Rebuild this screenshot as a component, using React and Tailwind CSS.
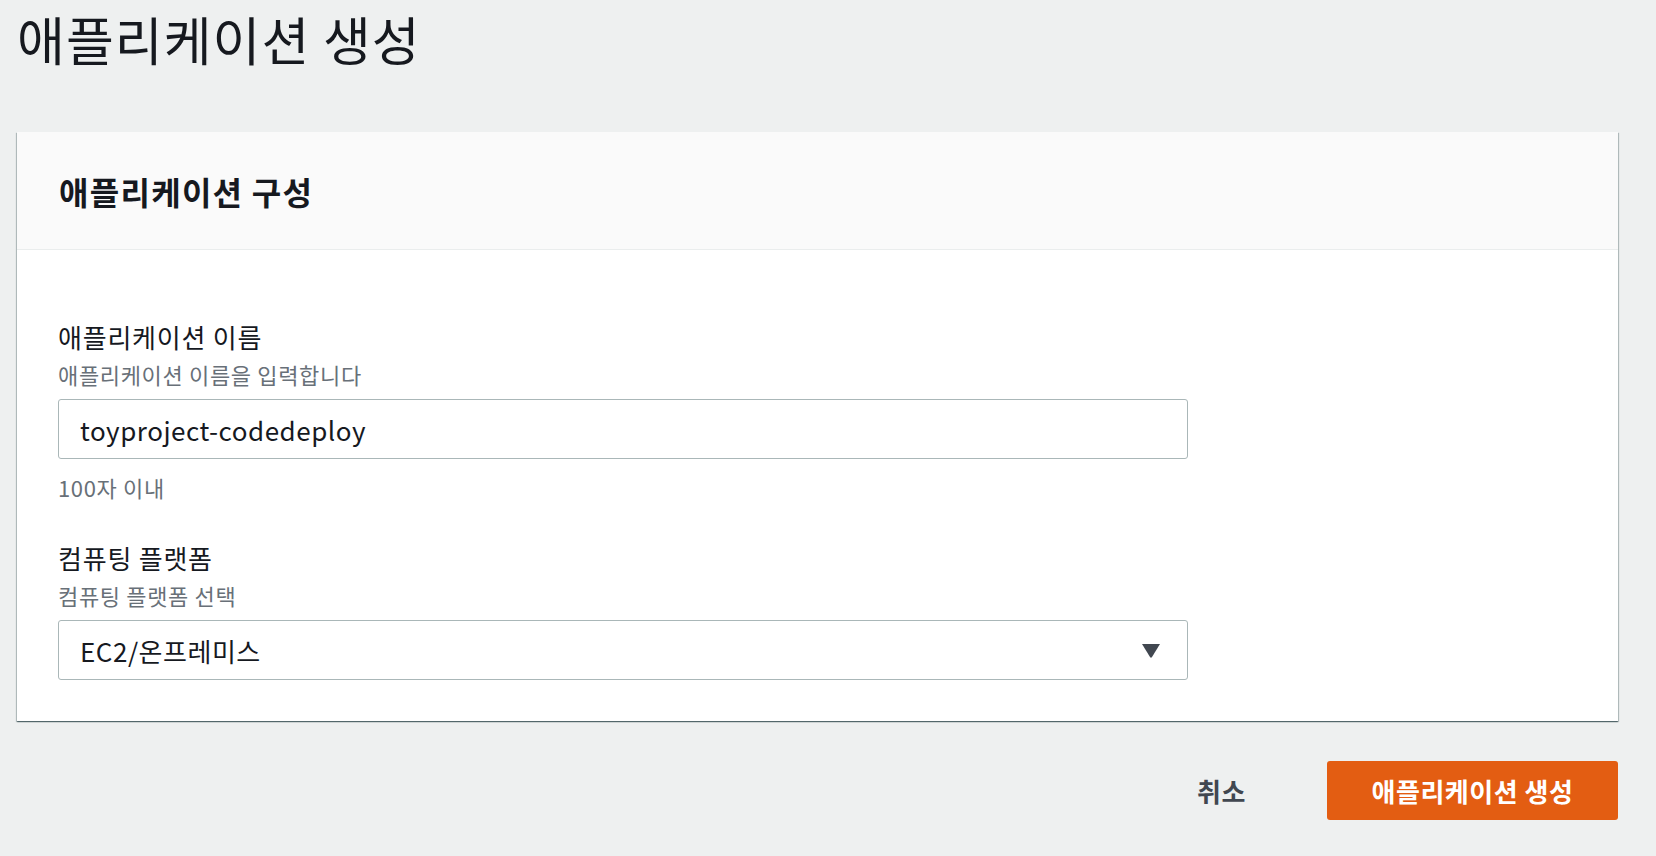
const FONT = "font-['Noto_Sans_CJK_KR','Noto_Sans',sans-serif]";

function Field({ label, description, hint, children }) {
  return (
    <div>
      <p className="text-[26px] leading-[34px] tracking-[0.03em] text-[#16191f]">{label}</p>
      <p className="mt-[7px] text-[22px] leading-[26px] tracking-[0.03em] text-[#687078]">
        {description}
      </p>
      <div className="mt-[12px]">{children}</div>
      {hint ? (
        <p className="mt-[15px] text-[22px] leading-[26px] tracking-[0.03em] text-[#687078]">
          {hint}
        </p>
      ) : null}
    </div>
  );
}

export default function App() {
  return (
    <div className={`min-h-screen bg-[#eef0f0] pl-[17px] pr-[38px] pt-[9px] ${FONT}`}>
      <h1 className="text-[52px] font-normal leading-[60px] tracking-[0.02em] text-[#16191f]">
        애플리케이션 생성
      </h1>

      <section className="mt-[63px] bg-white shadow-[0_1px_1px_0_rgba(0,28,36,0.45),1px_1px_1px_0_rgba(0,28,36,0.2),-1px_1px_1px_0_rgba(0,28,36,0.2)]">
        <div className="flex h-[118px] items-center border-b border-[#eaeded] bg-[#fafafa] px-[42px]">
          <h2 className="text-[32px] font-bold leading-[38px] tracking-[0.04em] text-[#16191f]">
            애플리케이션 구성
          </h2>
        </div>

        <div className="pb-[41px] pl-[41px] pr-[40px] pt-[70px]">
          <div className="w-[1130px]">
            <Field
              label="애플리케이션 이름"
              description="애플리케이션 이름을 입력합니다"
              hint="100자 이내"
            >
              <input
                readOnly
                value="toyproject-codedeploy"
                className={`h-[60px] w-full rounded-[3px] border border-[#aab7b8] bg-white px-[21px] text-[26px] tracking-[0.02em] text-[#16191f] outline-none ${FONT}`}
              />
            </Field>

            <div className="mt-[41px]">
              <Field label="컴퓨팅 플랫폼" description="컴퓨팅 플랫폼 선택">
                <div className="flex h-[60px] w-full items-center justify-between rounded-[3px] border border-[#aab7b8] bg-white pl-[21px] pr-[26px]">
                  <span className="text-[26px] tracking-[0.02em] text-[#16191f]">EC2/온프레미스</span>
                  <svg width="20" height="15" viewBox="0 0 20 15" aria-hidden="true">
                    <path d="M1 1 H19 L11 14 Q10 15.5 9 14 Z" fill="#414750" />
                  </svg>
                </div>
              </Field>
            </div>
          </div>
        </div>
      </section>

      <div className="mt-[40px] flex items-center justify-end gap-[78px]">
        <button
          type="button"
          className="px-[3px] text-[26px] font-bold tracking-[0.02em] text-[#414750]"
        >
          취소
        </button>
        <button
          type="button"
          className="h-[59px] w-[291px] rounded-[3px] bg-[#e35d12] text-[26px] font-bold tracking-[0.02em] text-white"
        >
          애플리케이션 생성
        </button>
      </div>
    </div>
  );
}
